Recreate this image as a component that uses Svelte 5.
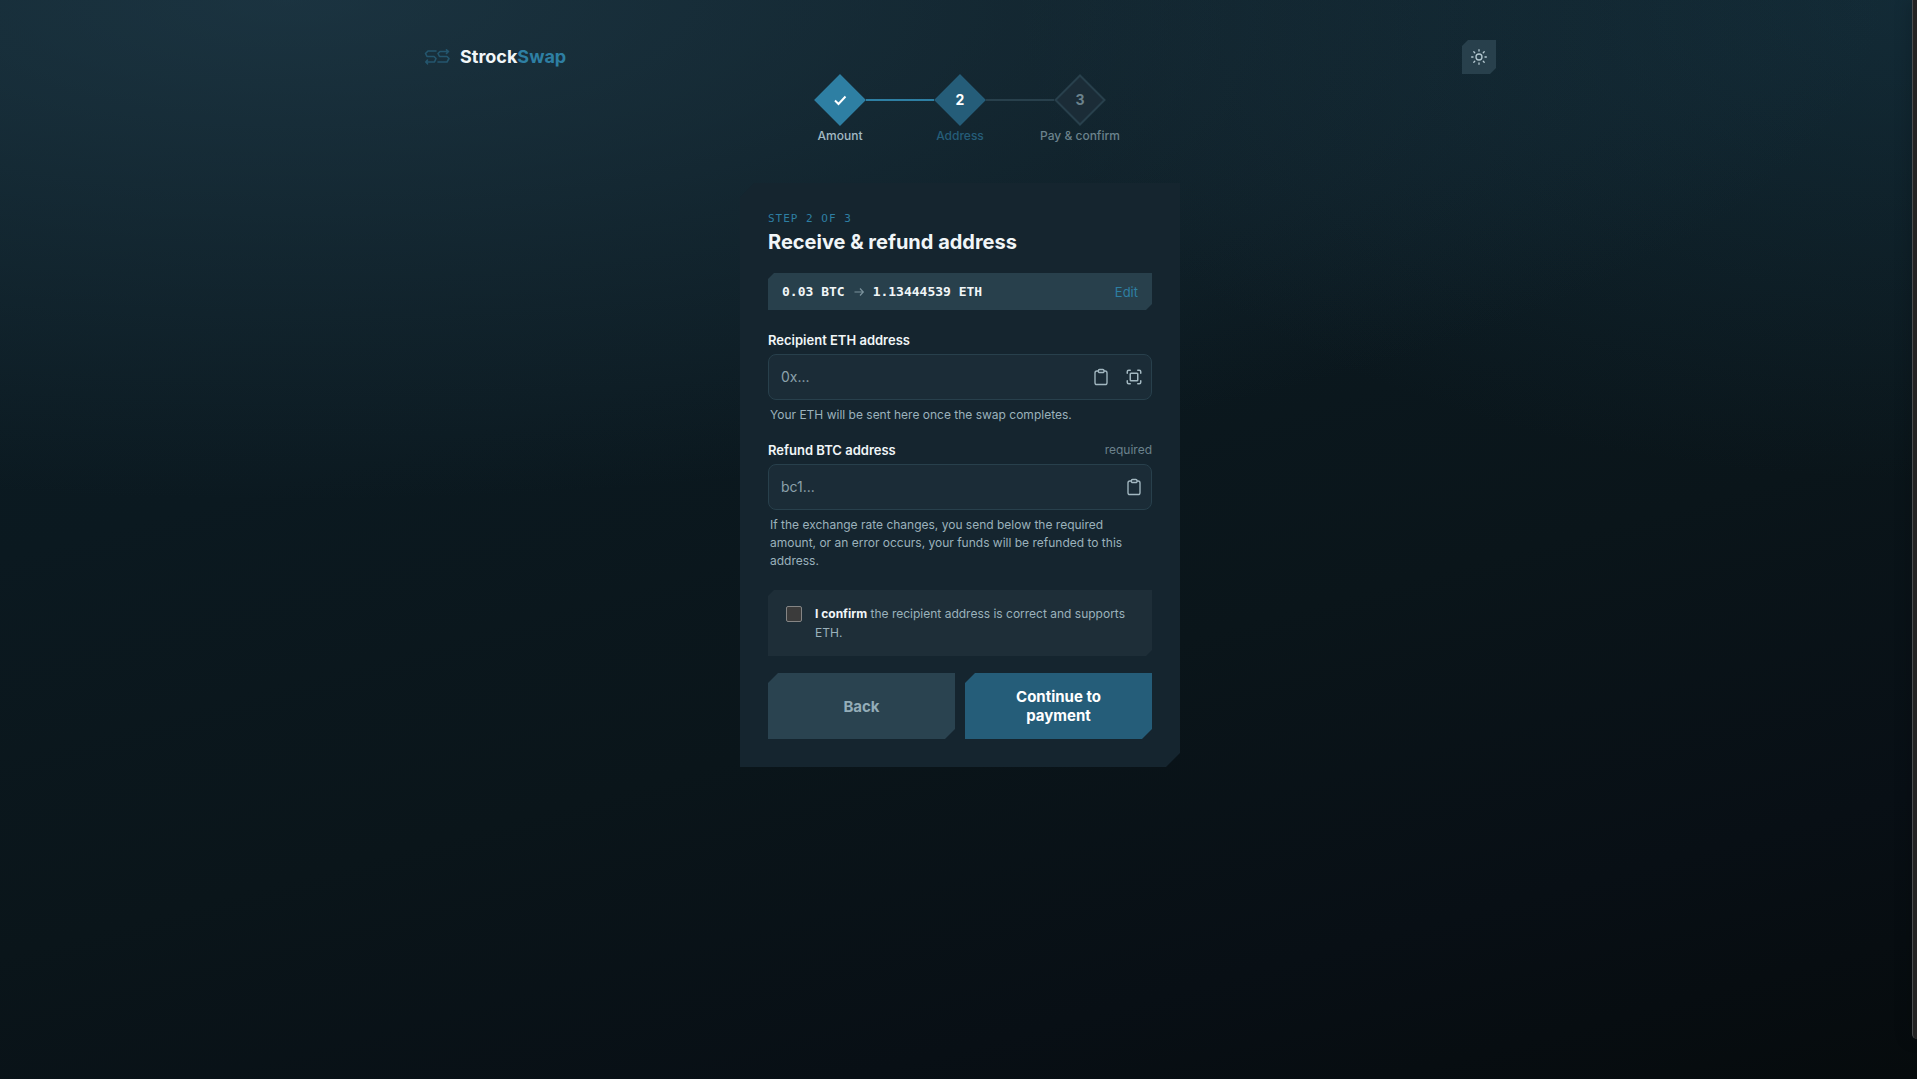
<script>
  let recipient = $state('');
  let refund = $state('');
  let confirmed = $state(false);

  const steps = [
    { number: 1, label: 'Amount', status: 'done' },
    { number: 2, label: 'Address', status: 'current' },
    { number: 3, label: 'Pay & confirm', status: 'upcoming' }
  ];
</script>

{#snippet clipboard()}
  <svg width="18" height="18" viewBox="0 0 24 24" fill="none" stroke="currentColor" stroke-width="1.8" stroke-linejoin="round" aria-hidden="true">
    <rect x="8.5" y="2" width="7.5" height="4" rx="1.5" />
    <path d="M16 4h1.5a2.5 2.5 0 0 1 2.5 2.5v13a2.5 2.5 0 0 1-2.5 2.5h-11a2.5 2.5 0 0 1-2.5-2.5v-13a2.5 2.5 0 0 1 2.5-2.5H8.5" />
  </svg>
{/snippet}

<div class="page">
  <div class="shell">
    <header>
      <a class="brand" href="/">
        <svg width="26" height="16" viewBox="0 0 26 16" fill="none" stroke="currentColor" stroke-width="1.6" stroke-linecap="round" stroke-linejoin="round" aria-hidden="true">
          <path d="M12 2H4L1.500 4.500L3 7.500H10L12 9.500L10.500 13H2M3.500 11L1.800 13L3.500 14.800" />
          <path d="M24.500 2.500H16L14 4.500L15.500 7.500H23L25 9.500L23 13H14M22.500 .8L24.500 2.500L22.500 4.500" />
        </svg>
        <span class="name">Strock<span>Swap</span></span>
      </a>
      <button class="theme" aria-label="Switch theme">
        <svg width="16" height="16" viewBox="0 0 24 24" fill="none" stroke="currentColor" stroke-width="2" stroke-linecap="round" aria-hidden="true">
          <circle cx="12" cy="12" r="4.500" />
          <path d="M12 1v2M12 21v2M1 12h2M21 12h2M4.200 4.200l1.400 1.400M18.400 18.400l1.400 1.400M4.200 19.800l1.400-1.400M18.400 5.600l1.400-1.400" />
        </svg>
      </button>
    </header>

    <ol class="steps">
      {#each steps as step}
        <li class={step.status}>
          <svg class="diamond" width="52" height="52" viewBox="0 0 52 52" aria-hidden="true">
            <path class="shape" d="M26 1.500L50.500 26L26 50.500L1.500 26Z" />
            {#if step.status === 'done'}
              <path class="tick" d="M21 26.500l3.500 3.500l7-7.500" />
            {:else}
              <text x="26" y="31" text-anchor="middle">{step.number}</text>
            {/if}
          </svg>
          <span>{step.label}</span>
        </li>
      {/each}
    </ol>

    <main>
      <p class="eyebrow">STEP 2 OF 3</p>
      <h1>Receive &amp; refund address</h1>

      <div class="summary">
        <strong>0.03 BTC</strong>
        <svg width="12" height="12" viewBox="0 0 12 12" fill="none" stroke="currentColor" stroke-width="1.2" aria-hidden="true">
          <path d="M1.500 6h8.500M7 2.500L10.300 6L7 9.500" />
        </svg>
        <strong>1.13444539 ETH</strong>
        <a href="#edit">Edit</a>
      </div>

      <div class="label"><label for="recipient">Recipient ETH address</label></div>
      <div class="field">
        <input id="recipient" type="text" placeholder="0x..." bind:value={recipient} />
        <button aria-label="Paste recipient address">{@render clipboard()}</button>
        <button aria-label="Scan code">
          <svg width="18" height="18" viewBox="0 0 24 24" fill="none" stroke="currentColor" stroke-width="2" stroke-linecap="round" stroke-linejoin="round" aria-hidden="true">
            <path d="M3 7V5a2 2 0 0 1 2-2h2M17 3h2a2 2 0 0 1 2 2v2M21 17v2a2 2 0 0 1-2 2h-2M7 21H5a2 2 0 0 1-2-2v-2" />
            <rect x="7" y="7" width="10" height="10" rx="1" />
          </svg>
        </button>
      </div>
      <p class="hint">Your ETH will be sent here once the swap completes.</p>

      <div class="label"><label for="refund">Refund BTC address</label><span>required</span></div>
      <div class="field">
        <input id="refund" type="text" placeholder="bc1..." bind:value={refund} />
        <button aria-label="Paste refund address">{@render clipboard()}</button>
      </div>
      <p class="hint">If the exchange rate changes, you send below the required amount, or an error occurs, your funds will be refunded to this address.</p>

      <label class="confirm">
        <input type="checkbox" bind:checked={confirmed} />
        <span><b>I confirm</b> the recipient address is correct and supports ETH.</span>
      </label>

      <div class="actions">
        <button class="back">Back</button>
        <button class="next">Continue to payment</button>
      </div>
    </main>
  </div>
  <aside class="edge"></aside>
</div>

<style>
  :global(body) {
    background: #070d10;
  }
  .page {
    position: relative;
    box-sizing: border-box;
    min-height: 100vh;
    padding: 40px 0 40px 3px;
    overflow: hidden;
    font-family: Inter, "Liberation Sans", sans-serif;
    color: #f1f6f8;
    background:
      radial-gradient(ellipse 1600px 500px at 15% 0, rgba(46, 80, 99, 0.45), transparent),
      radial-gradient(ellipse 900px 480px at 100% 0, rgba(34, 76, 96, 0.35), transparent),
      linear-gradient(165deg, #0b1c24 0%, #0b1920 35%, #0a151a 60%, #080f15 82%, #060b0d 100%);
  }
  .shell {
    max-width: 1072px;
    margin: 0 auto;
  }
  button {
    border: 0;
    padding: 0;
    font: inherit;
    cursor: pointer;
  }
  p, h1, ol {
    margin: 0;
    padding: 0;
  }
  svg {
    display: block;
    flex: none;
  }
  header {
    display: flex;
    align-items: center;
    justify-content: space-between;
    height: 34px;
  }
  .brand {
    display: flex;
    align-items: center;
    gap: 10px;
    color: #24566e;
    text-decoration: none;
  }
  .name {
    font-size: 18px;
    font-weight: 700;
    line-height: 26px;
    color: #f1f6f8;
  }
  .name span {
    color: #2e7fa3;
  }
  .theme {
    display: grid;
    place-items: center;
    width: 34px;
    height: 34px;
    color: #b3c7cf;
    background: #28404c;
    clip-path: polygon(6px 0, 100% 0, 100% calc(100% - 6px), calc(100% - 6px) 100%, 0 100%, 0 6px);
  }
  .steps {
    display: flex;
    justify-content: center;
    list-style: none;
  }
  .steps li {
    position: relative;
    display: flex;
    flex-direction: column;
    align-items: center;
    gap: 2px;
    width: 120px;
    font-size: 12px;
    font-weight: 500;
    line-height: 16px;
    color: #6b828c;
  }
  .steps li + li::before {
    content: "";
    position: absolute;
    top: 25px;
    left: -34px;
    width: 68px;
    height: 2px;
    background: #28404c;
  }
  .steps li.current::before {
    background: #2e7fa3;
  }
  .steps .done {
    color: #a3bac3;
  }
  .steps .current {
    color: #255d79;
  }
  .shape {
    fill: #1b2c37;
    stroke: #28404c;
    stroke-width: 2;
  }
  .done .shape {
    fill: #2e7fa3;
    stroke: #2e7fa3;
  }
  .current .shape {
    fill: #255d79;
    stroke: #255d79;
  }
  .tick {
    fill: none;
    stroke: #fff;
    stroke-width: 2;
  }
  text {
    font-size: 14px;
    font-weight: 700;
    fill: #6b828c;
  }
  .current text {
    fill: #fff;
  }
  main {
    box-sizing: border-box;
    max-width: 440px;
    margin: 39px auto 0;
    padding: 28px;
    background: #15252f;
    clip-path: polygon(14px 0, 100% 0, 100% calc(100% - 14px), calc(100% - 14px) 100%, 0 100%, 0 14px);
  }
  .eyebrow {
    font-family: "DejaVu Sans Mono", monospace;
    font-size: 11px;
    line-height: 16px;
    letter-spacing: 1px;
    color: #2e7fa3;
  }
  h1 {
    margin-top: 2px;
    font-size: 20px;
    font-weight: 700;
    line-height: 26px;
  }
  .summary {
    display: flex;
    align-items: center;
    gap: 8px;
    margin: 18px 0 21px;
    padding: 0 14px;
    height: 37px;
    color: #7b929c;
    background: #28404c;
    clip-path: polygon(6px 0, 100% 0, 100% calc(100% - 6px), calc(100% - 6px) 100%, 0 100%, 0 6px);
  }
  .summary strong {
    font-family: "DejaVu Sans Mono", monospace;
    font-size: 13px;
    color: #f1f6f8;
  }
  .summary a {
    margin-left: auto;
    font-size: 13px;
    color: #2e7fa3;
    text-decoration: none;
  }
  .label {
    display: flex;
    justify-content: space-between;
    margin-bottom: 5px;
    font-size: 13px;
    line-height: 18px;
  }
  .label label {
    font-weight: 600;
  }
  .label span {
    font-size: 12px;
    color: #6b828c;
  }
  .field {
    display: flex;
    align-items: center;
    gap: 5px;
    box-sizing: border-box;
    height: 46px;
    padding: 0 3px 0 12px;
    border: 1px solid #28404c;
    border-radius: 8px;
    background: #1b2c37;
  }
  .field input {
    flex: 1;
    min-width: 0;
    padding: 0;
    border: 0;
    outline: 0;
    font: 14px/20px Inter, sans-serif;
    color: #f1f6f8;
    background: none;
  }
  .field input::placeholder {
    color: #8ba1ab;
    opacity: 1;
  }
  .field button {
    display: grid;
    place-items: center;
    width: 28px;
    height: 28px;
    color: #a3b8c1;
    background: none;
  }
  .hint {
    margin: 6px 0 17px;
    padding: 0 2px;
    font-size: 12px;
    line-height: 18px;
    color: #9bb2bc;
  }
  .confirm {
    display: flex;
    gap: 13px;
    margin-top: 20px;
    padding: 14px 12px 14px 18px;
    font-size: 12px;
    line-height: 19px;
    color: #9bb2bc;
    background: #1e2e38;
    clip-path: polygon(6px 0, 100% 0, 100% calc(100% - 6px), calc(100% - 6px) 100%, 0 100%, 0 6px);
  }
  .confirm b {
    font-weight: 700;
    color: #f1f6f8;
  }
  .confirm input {
    flex: none;
    appearance: none;
    width: 16px;
    height: 16px;
    margin: 2px 0 0;
    border: 1px solid #858585;
    border-radius: 2px;
    background: #3b3b3b;
  }
  .confirm input:checked {
    background: #2e7fa3;
  }
  .actions {
    display: grid;
    grid-template-columns: 1fr 1fr;
    gap: 10px;
    margin-top: 17px;
  }
  .actions button {
    min-height: 66px;
    padding: 14px 32px;
    font-size: 15px;
    font-weight: 700;
    line-height: 19px;
    clip-path: polygon(10px 0, 100% 0, 100% calc(100% - 10px), calc(100% - 10px) 100%, 0 100%, 0 10px);
  }
  .back {
    color: #94adb8;
    background: #2a4350;
  }
  .next {
    color: #fff;
    background: #255d79;
  }
  .edge {
    position: absolute;
    top: 0;
    right: 0;
    bottom: 40px;
    width: 4px;
    border-left: 1px solid #4a4d4f;
    border-bottom-left-radius: 8px;
    background: #242424;
    box-shadow: 0 0 16px rgba(0, 0, 0, 0.4);
  }
</style>
